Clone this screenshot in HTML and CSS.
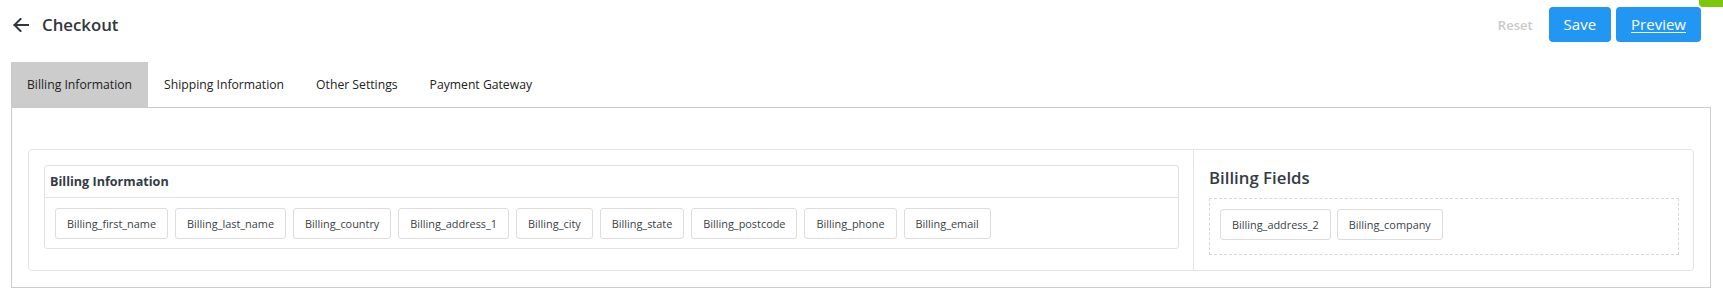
FILE: index.html
```html
<!DOCTYPE html>
<html lang="en">
<head>
<meta charset="utf-8">
<title>Checkout</title>
<link rel="stylesheet" href="styles.css">
</head>
<body>
<div class="page">
  <header class="topbar">
    <div class="title">
      <svg class="back" width="16" height="14" viewBox="0 0 16 14" aria-hidden="true">
        <path d="M15.5 7H1.5M7.5 1L1.5 7L7.5 13" fill="none" stroke="#32373c" stroke-width="2" stroke-linecap="square" stroke-linejoin="miter"/>
      </svg>
      <h1>Checkout</h1>
    </div>
    <div class="actions">
      <button class="btn-reset">Reset</button>
      <button class="btn btn-primary">Save</button>
      <button class="btn btn-primary btn-underline">Preview</button>
    </div>
  </header>

  <nav class="tabs">
    <a class="tab active">Billing Information</a>
    <a class="tab">Shipping Information</a>
    <a class="tab">Other Settings</a>
    <a class="tab">Payment Gateway</a>
  </nav>

  <section class="tab-panel">
    <div class="card">
      <div class="col-main">
        <div class="group">
          <div class="group-head">Billing Information</div>
          <div class="chips">
            <span class="chip">Billing_first_name</span>
            <span class="chip">Billing_last_name</span>
            <span class="chip">Billing_country</span>
            <span class="chip">Billing_address_1</span>
            <span class="chip">Billing_city</span>
            <span class="chip">Billing_state</span>
            <span class="chip">Billing_postcode</span>
            <span class="chip">Billing_phone</span>
            <span class="chip">Billing_email</span>
          </div>
        </div>
      </div>
      <div class="col-side">
        <h2>Billing Fields</h2>
        <div class="dropzone">
          <span class="chip">Billing_address_2</span>
          <span class="chip">Billing_company</span>
        </div>
      </div>
    </div>
  </section>
</div>
<span class="corner-badge"></span>
</body>
</html>
```
FILE: styles.css
```css
* { box-sizing: border-box; }

html, body {
  margin: 0;
  padding: 0;
  background: #ffffff;
}

body {
  font-family: "Open Sans", "Noto Sans", sans-serif;
  color: #333333;
}

.page {
  padding: 0 12px 0 11px;
}

/* ---------- top bar ---------- */
.topbar {
  display: flex;
  align-items: center;
  justify-content: space-between;
  padding-top: 7px;
  height: 42px;
}

.title {
  display: flex;
  align-items: center;
  gap: 13px;
  padding-left: 2px;
}

.back { display: block; }

.title h1 {
  margin: 0;
  font-size: 16.8px;
  font-weight: 600;
  color: #32373c;
  line-height: 24px;
}

.actions {
  display: flex;
  align-items: center;
  gap: 5px;
  margin-right: 10px;
}

button {
  font-family: inherit;
  cursor: pointer;
}

.btn-reset {
  background: transparent;
  border: 0;
  color: #c8c8c8;
  font-size: 13px;
  font-weight: 600;
  padding: 0 16px;
  height: 35px;
  margin-right: -5px;
}

.btn {
  height: 35px;
  border: 0;
  border-radius: 4px;
  font-size: 15px;
  padding: 0 15px;
  line-height: 35px;
}

.btn-primary {
  background: #2196f3;
  color: #ffffff;
}

.btn-underline {
  text-decoration: underline;
  text-underline-offset: 2px;
}

/* ---------- tabs ---------- */
.tabs {
  display: flex;
  margin-top: 20px;
}

.tab {
  display: block;
  height: 45px;
  line-height: 45px;
  padding: 0 16px 0 16px;
  font-size: 12.2px;
  color: #222222;
}

.tab.active {
  background: #cccccc;
}

.tab-panel {
  border: 1px solid #cccccc;
  padding: 41px 16px 16px;
}

/* ---------- card ---------- */
.card {
  display: flex;
  border: 1px solid #e4e4e4;
  border-radius: 4px;
}

.col-main {
  flex: 1 1 auto;
  padding: 15px 14px 15px 15px;
}

.col-side {
  flex: 0 0 500px;
  border-left: 1px solid #e4e4e4;
  padding: 15px 14px 15px 15px;
}

.col-side h2 {
  margin: 0 0 8px;
  font-size: 16.8px;
  font-weight: 600;
  line-height: 25px;
  color: #333b44;
}

.group {
  border: 1px solid #e2e2e2;
  border-radius: 3px;
}

.group-head {
  height: 32px;
  line-height: 31px;
  padding: 0 6px 0 5px;
  font-size: 12.6px;
  font-weight: 700;
  color: #333b44;
  border-bottom: 1px solid #e2e2e2;
}

.chips {
  display: flex;
  flex-wrap: wrap;
  gap: 7px;
  padding: 10px 10px 9px;
}

.dropzone {
  display: flex;
  flex-wrap: wrap;
  gap: 6px;
  border: 1px dashed #d8d8d8;
  padding: 10px 10px 14px;
}

.chip {
  display: inline-block;
  height: 31px;
  line-height: 29px;
  padding: 0 11px;
  border: 1px solid #dddddd;
  border-radius: 3px;
  font-size: 10.9px;
  color: #3a3f45;
  background: #ffffff;
  white-space: nowrap;
}

/* ---------- corner badge ---------- */
.corner-badge {
  position: absolute;
  top: 0;
  right: 0;
  width: 24px;
  height: 7px;
  background: #7ac70c;
  border-bottom-left-radius: 4px;
}
```
